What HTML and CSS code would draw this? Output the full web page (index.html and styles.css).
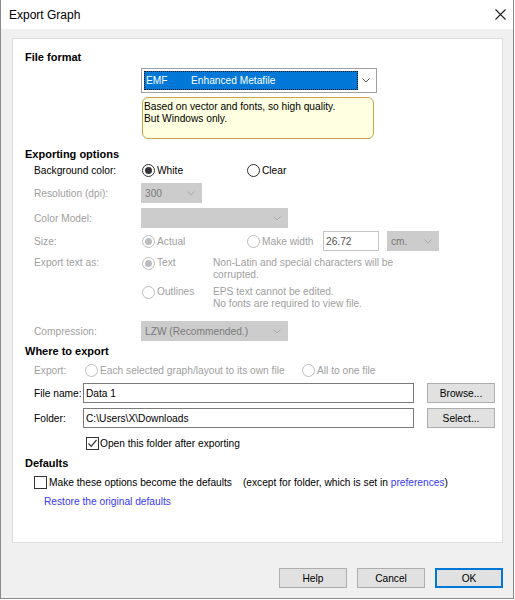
FILE: index.html
```html
<!DOCTYPE html>
<html lang="en">
<head>
    <meta charset="UTF-8">
    <meta name="viewport" content="width=device-width, initial-scale=1.0">
    <title>Export Graph</title>
    <link rel="stylesheet" href="styles.css">
</head>
<body>
    <div class="window">
        <div class="titlebar">
            <span class="title">Export Graph</span>
            <svg class="close" width="11" height="11" viewBox="0 0 11 11">
                <path d="M0.5 0.5 L10.5 10.5 M10.5 0.5 L0.5 10.5" stroke="#1f1f1f" stroke-width="1.1" fill="none"/>
            </svg>
        </div>

        <div class="content">
            <div class="panel">
                <h2 class="section">File format</h2>
                <div class="format">
                    <div class="format-value"><span class="format-ext">EMF</span>Enhanced Metafile</div>
                    <div class="format-arrow">
                        <svg width="8" height="5" viewBox="0 0 8 5"><polyline points="0.5,0.5 4,4 7.5,0.5" fill="none" stroke="#555" stroke-width="1"/></svg>
                    </div>
                </div>
                <div class="hint">Based on vector and fonts, so high quality.<br>But Windows only.</div>

                <h2 class="section sec-options">Exporting options</h2>
                <div class="row row-bg">
                    <span class="label">Background color:</span>
                    <div class="opt opt-first"><span class="radio on"></span>White</div>
                    <div class="opt"><span class="radio"></span>Clear</div>
                </div>
                <div class="row row-res disabled">
                    <span class="label">Resolution (dpi):</span>
                    <div class="select w-res"><span>300</span>
                        <svg width="8" height="5" viewBox="0 0 8 5"><polyline points="0.5,0.5 4,4 7.5,0.5" fill="none" stroke="#a8a8a8" stroke-width="1"/></svg>
                    </div>
                </div>
                <div class="row row-color disabled">
                    <span class="label">Color Model:</span>
                    <div class="select w-wide"><span></span>
                        <svg width="8" height="5" viewBox="0 0 8 5"><polyline points="0.5,0.5 4,4 7.5,0.5" fill="none" stroke="#a8a8a8" stroke-width="1"/></svg>
                    </div>
                </div>
                <div class="row row-size disabled">
                    <span class="label">Size:</span>
                    <div class="opt opt-first"><span class="radio on"></span>Actual</div>
                    <div class="opt opt-width"><span class="radio"></span>Make width</div>
                    <input class="field num" type="text" value="26.72">
                    <div class="select w-unit"><span>cm.</span>
                        <svg width="8" height="5" viewBox="0 0 8 5"><polyline points="0.5,0.5 4,4 7.5,0.5" fill="none" stroke="#a8a8a8" stroke-width="1"/></svg>
                    </div>
                </div>
                <div class="row row-text disabled">
                    <span class="label">Export text as:</span>
                    <div class="opt opt-text"><span class="radio on"></span>Text</div>
                    <div class="desc">Non-Latin and special characters will be<br>corrupted.</div>
                </div>
                <div class="row row-outlines disabled">
                    <div class="opt opt-text"><span class="radio"></span>Outlines</div>
                    <div class="desc">EPS text cannot be edited.<br>No fonts are required to view file.</div>
                </div>
                <div class="row row-compress disabled">
                    <span class="label">Compression:</span>
                    <div class="select w-wide dark"><span>LZW (Recommended.)</span>
                        <svg width="8" height="5" viewBox="0 0 8 5"><polyline points="0.5,0.5 4,4 7.5,0.5" fill="none" stroke="#a8a8a8" stroke-width="1"/></svg>
                    </div>
                </div>

                <h2 class="section sec-where">Where to export</h2>
                <div class="row row-export disabled">
                    <span class="label label-short">Export:</span>
                    <div class="opt opt-each"><span class="radio"></span>Each selected graph/layout to its own file</div>
                    <div class="opt"><span class="radio"></span>All to one file</div>
                </div>
                <div class="row row-file">
                    <span class="label label-file">File name:</span>
                    <input class="field path" type="text" value="Data 1">
                    <button class="btn side">Browse...</button>
                </div>
                <div class="row row-folder">
                    <span class="label label-file">Folder:</span>
                    <input class="field path" type="text" value="C:\Users\X\Downloads">
                    <button class="btn side">Select...</button>
                </div>
                <div class="row row-open">
                    <span class="check">
                        <svg width="11" height="11" viewBox="0 0 11 11"><polyline points="1.5,5.5 4.2,8.3 9.5,2" fill="none" stroke="#333" stroke-width="1.2"/></svg>
                    </span>
                    Open this folder after exporting
                </div>

                <h2 class="section sec-defaults">Defaults</h2>
                <div class="row row-defaults">
                    <span class="check"></span>
                    Make these options become the defaults
                    <span class="note">(except for folder, which is set in <a href="#">preferences</a>)</span>
                </div>
                <a class="restore" href="#">Restore the original defaults</a>
            </div>

            <div class="footer">
                <button class="btn">Help</button>
                <button class="btn">Cancel</button>
                <button class="btn default">OK</button>
            </div>
        </div>
    </div>
</body>
</html>
```

FILE: styles.css
```css
body {
    margin: 0;
    font-family: "Liberation Sans", Arial, sans-serif;
    font-size: 10.2px;
    color: #000;
    background: #fff;
}
.window {
    width: 514px;
    height: 599px;
    box-sizing: border-box;
    border: 1px solid #8a8a8a;
    border-top: none;
    background: #f0f0f0;
    display: flex;
    flex-direction: column;
}
.titlebar {
    flex: none;
    height: 29px;
    background: #fff;
    display: flex;
    align-items: center;
    justify-content: space-between;
    padding: 0 7px 0 8px;
}
.title {
    font-size: 12px;
}
.close {
    display: block;
}
.content {
    flex: 1;
    padding: 9px 10px 0 11px;
}
.panel {
    background: #fff;
    border: 1px solid #dcdcdc;
    padding: 11px 12px 33px 12px;
}
.section {
    margin: 0;
    font-size: 11px;
    font-weight: bold;
    line-height: 14px;
}
.sec-options {
    margin-top: 8px;
}
.sec-where {
    margin-top: 3px;
}
.sec-defaults {
    margin-top: 5px;
}

/* file format box */
.format {
    margin: 4px 0 0 116px;
    width: 236px;
    height: 25px;
    box-sizing: border-box;
    border: 1px solid #a0a0a0;
    padding: 2px;
    display: flex;
}
.format-value {
    width: 214px;
    box-sizing: border-box;
    background: #0078d7;
    color: #fff;
    outline: 1px dotted #111;
    outline-offset: -1px;
    display: flex;
    align-items: center;
    padding-left: 2px;
}
.format-ext {
    width: 45px;
}
.format-arrow {
    flex: 1;
    display: flex;
    align-items: center;
    justify-content: center;
}
.hint {
    margin: 4px 0 0 117px;
    width: 232px;
    height: 42px;
    box-sizing: border-box;
    border: 1px solid #c6a64a;
    border-radius: 6px;
    background: #ffffe1;
    padding: 3px 1px;
    line-height: 12px;
}

/* rows */
.row {
    display: flex;
    align-items: center;
    padding-left: 9px;
    height: 20px;
}
.label {
    flex: none;
    width: 107px;
}
.disabled {
    color: #a0a0a0;
}
.row-bg {
    height: 18px;
}
.row-res {
    margin-top: 4px;
}
.row-color {
    margin-top: 5px;
}
.row-size {
    margin-top: 3px;
}
.row-text {
    margin-top: 6px;
    height: 24px;
    align-items: flex-start;
    line-height: 12px;
}
.row-outlines {
    margin-top: 5px;
    height: 24px;
    align-items: flex-start;
    line-height: 12px;
    padding-left: 116px;
}
.row-compress {
    margin-top: 11px;
}
.row-export {
    margin-top: 3px;
    height: 18px;
}
.row-file {
    margin-top: 4px;
}
.row-folder {
    margin-top: 5px;
}
.row-open {
    margin-top: 7px;
    height: 16px;
    padding-left: 61px;
    gap: 1px;
}
.row-defaults {
    margin-top: 4px;
    height: 16px;
    gap: 2px;
}
.label-short {
    width: 50px;
}
.label-file {
    width: 49px;
}

/* radios and checks */
.opt {
    display: flex;
    align-items: center;
    gap: 2px;
}
.opt-first {
    width: 105px;
}
.opt-width {
    width: 77px;
}
.opt-text {
    width: 72px;
    height: 12px;
}
.opt-each {
    width: 217px;
}
.radio {
    flex: none;
    width: 13px;
    height: 13px;
    margin-left: 1px;
    box-sizing: border-box;
    border: 1px solid #333;
    border-radius: 50%;
    background: #fff;
    display: flex;
    align-items: center;
    justify-content: center;
}
.radio.on::after {
    content: "";
    width: 7px;
    height: 7px;
    border-radius: 50%;
    background: #333;
}
.disabled .radio {
    border-color: #bcbcbc;
}
.disabled .radio.on::after {
    background: #bcbcbc;
}
.check {
    flex: none;
    width: 13px;
    height: 13px;
    box-sizing: border-box;
    border: 1px solid #333;
    background: #fff;
    display: flex;
    align-items: center;
    justify-content: center;
}
.check svg {
    display: block;
}
.desc {
    line-height: 12px;
}

/* selects, inputs, buttons */
.select {
    flex: none;
    height: 20px;
    box-sizing: border-box;
    background: #cccccc;
    border: 1px solid #cccccc;
    padding: 0 6px 0 3px;
    display: flex;
    align-items: center;
    justify-content: space-between;
    color: #7a7a7a;
}
.select svg {
    display: block;
}
.w-res {
    width: 61px;
}
.w-wide {
    width: 147px;
}
.w-unit {
    width: 52px;
}
.field {
    flex: none;
    height: 20px;
    box-sizing: border-box;
    border: 1px solid #7a7a7a;
    padding: 0 2px;
    margin: 0;
    font: inherit;
    color: #000;
    background: #fff;
    outline: none;
}
.num {
    width: 56px;
    margin-right: 8px;
    border-color: #c4c4c4;
    color: #555;
}
.path {
    width: 331px;
}
.btn {
    flex: none;
    width: 68px;
    height: 20px;
    box-sizing: border-box;
    background: #e1e1e1;
    border: 1px solid #adadad;
    padding: 0;
    font: inherit;
    color: #000;
}
.btn.side {
    margin-left: 13px;
}
.btn.default {
    border-color: #0078d7;
    box-shadow: inset 0 0 0 1px #0078d7;
}
.note {
    margin-left: 9px;
}
a {
    color: #3a3af0;
    text-decoration: none;
}
.restore {
    display: block;
    margin: 5px 0 0 19px;
    line-height: 14px;
}
.footer {
    display: flex;
    justify-content: flex-end;
    gap: 10px;
    padding-top: 25px;
}
```
